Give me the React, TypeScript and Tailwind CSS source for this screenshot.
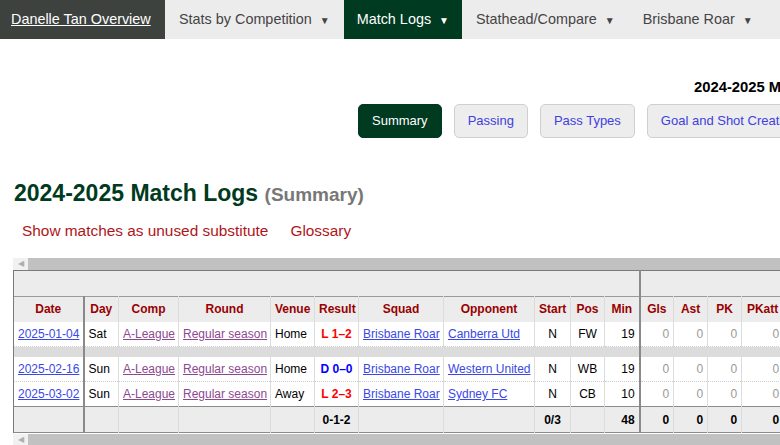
import React from "react"

const navItems = [
  { label: "Danelle Tan Overview", kind: "home" },
  { label: "Stats by Competition", kind: "menu" },
  { label: "Match Logs", kind: "active" },
  { label: "Stathead/Compare", kind: "menu" },
  { label: "Brisbane Roar", kind: "menu" },
]

const tabs = ["Summary", "Passing", "Pass Types", "Goal and Shot Creation", "Defensive Actions"]

type Row = {
  date: string
  day: string
  venue: string
  result: string
  outcome: "L" | "D"
  opp: string
  pos: string
  min: string
}

const rows: (Row | null)[] = [
  { date: "2025-01-04", day: "Sat", venue: "Home", result: "L 1–2", outcome: "L", opp: "Canberra Utd", pos: "FW", min: "19" },
  null,
  { date: "2025-02-16", day: "Sun", venue: "Home", result: "D 0–0", outcome: "D", opp: "Western United", pos: "WB", min: "19" },
  { date: "2025-03-02", day: "Sun", venue: "Away", result: "L 2–3", outcome: "L", opp: "Sydney FC", pos: "CB", min: "10" },
]

const widths = [70, 35, 60, 92, 44, 44, 85, 91, 36, 34, 35, 34, 34, 34, 42, 34, 34, 34]
const heads = ["Date", "Day", "Comp", "Round", "Venue", "Result", "Squad", "Opponent", "Start", "Pos", "Min", "Gls", "Ast", "PK", "PKatt", "Sh", "SoT", "CrdY"]

const cell = "px-[4px] border-x border-[#dcdcdc] whitespace-nowrap overflow-hidden"
const thick = "border-r-2 border-r-[#8a8a8a]"
const link = "underline text-[#3a48e6]"
const visited = "underline text-[#8d4790]"

function Arrow() {
  return <span className="ml-[8px] text-[10px] relative top-[1px]">▼</span>
}

function ScrollBar() {
  return (
    <div className="flex h-[12px] w-full bg-[#f1f1f1]">
      <div className="w-[15px] flex items-center justify-center text-[8px] text-[#b0b0b0]">◀</div>
      <div className="flex-1 bg-[#c1c1c1]" />
    </div>
  )
}

export default function App() {
  return (
    <div className="w-[780px] h-[445px] overflow-hidden bg-white font-['Liberation_Sans',Arial,sans-serif] text-black">
      {/* top nav */}
      <div className="flex h-[39px] bg-[#ececec] text-[14.4px] text-[#444] whitespace-nowrap">
        {navItems.map((n) => (
          <div
            key={n.label}
            className={
              n.kind === "home"
                ? "flex items-center px-[11px] w-[165px] bg-[#3e423f] text-white underline"
                : n.kind === "active"
                ? "flex items-center px-[13px] bg-[#003a20] text-white"
                : "flex items-center px-[14px]"
            }
          >
            {n.label}
            {n.kind !== "home" && <Arrow />}
          </div>
        ))}
      </div>

      {/* section heading, centered on a wider page */}
      <div className="mt-[40px] ml-[694px] h-[17px] text-[14.8px] font-bold leading-[17px] whitespace-nowrap">
        2024-2025 Match Logs
      </div>

      <div className="mt-[8px] ml-[358px] flex gap-[12px] whitespace-nowrap">
        {tabs.map((t, i) => (
          <div
            key={t}
            className={
              i === 0
                ? "h-[34px] flex items-center px-[13px] rounded-[5px] border border-[#003a20] bg-[#003a20] text-white text-[13px]"
                : "h-[34px] flex items-center px-[13px] rounded-[5px] border border-[#cfcfcf] bg-[#ededed] text-[#4040e0] text-[13px]"
            }
          >
            {t}
          </div>
        ))}
      </div>

      <h1 className="mt-[41px] ml-[14px] h-[28px] leading-[28px] text-[23px] font-bold text-[#003a20] whitespace-nowrap">
        2024-2025 Match Logs <span className="text-[19px] text-[#777]">(Summary)</span>
      </h1>

      <div className="mt-[15px] ml-[22px] flex gap-[22px] text-[15.4px] leading-[18px] text-[#b0151a]">
        <span>Show matches as unused substitute</span>
        <span>Glossary</span>
      </div>

      {/* table */}
      <div className="mt-[18px] ml-[13px] overflow-hidden">
        <ScrollBar />
        <table className="table-fixed border-collapse text-[12px] leading-[14px]" style={{ width: widths.reduce((a, b) => a + b, 0) }}>
          <colgroup>
            {widths.map((w, i) => (
              <col key={i} style={{ width: w }} />
            ))}
          </colgroup>
          <thead>
            <tr className="h-[26px] bg-[#ececec] border-t border-[#7a7a7a]">
              <th colSpan={11} className={`${thick} border-l border-l-[#7a7a7a]`} />
              <th colSpan={7} />
            </tr>
            <tr className="h-[25px] bg-[#ececec] border-t border-[#9a9a9a] text-[#990000] font-bold">
              {heads.map((h, i) => (
                <th
                  key={h}
                  className={`${cell} ${i === 0 || i === 10 ? thick : ""} ${i === 0 ? "border-l-[#7a7a7a]" : ""}`}
                >
                  {h}
                </th>
              ))}
            </tr>
          </thead>
          <tbody>
            {rows.map((r, ri) =>
              r === null ? (
                <tr key={ri} className="h-[10px] bg-[#dcdcdc]">
                  <td className={`${thick} border-l border-l-[#7a7a7a]`} />
                  <td colSpan={9} />
                  <td className={thick} />
                  <td colSpan={7} />
                </tr>
              ) : (
                <tr key={ri} className="h-[25px] border-b border-dotted border-[#cfcfcf]">
                  <td className={`${cell} ${thick} border-l-[#7a7a7a]`}>
                    <span className={link}>{r.date}</span>
                  </td>
                  <td className={cell}>{r.day}</td>
                  <td className={cell}>
                    <span className={visited}>A-League</span>
                  </td>
                  <td className={cell}>
                    <span className={visited}>Regular season</span>
                  </td>
                  <td className={cell}>{r.venue}</td>
                  <td className={`${cell} text-center font-bold ${r.outcome === "L" ? "text-[#ff0000]" : "text-[#0000ff]"}`}>
                    {r.result}
                  </td>
                  <td className={cell}>
                    <span className={link}>Brisbane Roar</span>
                  </td>
                  <td className={cell}>
                    <span className={link}>{r.opp}</span>
                  </td>
                  <td className={`${cell} text-center`}>N</td>
                  <td className={`${cell} text-center`}>{r.pos}</td>
                  <td className={`${cell} ${thick} text-right`}>{r.min}</td>
                  {heads.slice(11).map((h) => (
                    <td key={h} className={`${cell} text-right text-[#999]`}>
                      0
                    </td>
                  ))}
                </tr>
              )
            )}
            <tr className="h-[26px] bg-[#ececec] border-t border-b border-[#8a8a8a] font-bold">
              <td className={`${cell} ${thick} border-l-[#7a7a7a]`} />
              <td className={cell} />
              <td className={cell} />
              <td className={cell} />
              <td className={cell} />
              <td className={`${cell} text-center`}>0-1-2</td>
              <td className={cell} />
              <td className={cell} />
              <td className={`${cell} text-center`}>0/3</td>
              <td className={cell} />
              <td className={`${cell} ${thick} text-right`}>48</td>
              {heads.slice(11).map((h) => (
                <td key={h} className={`${cell} text-right`}>
                  0
                </td>
              ))}
            </tr>
          </tbody>
        </table>
        <div className="mt-[1px]">
          <ScrollBar />
        </div>
      </div>
    </div>
  )
}
